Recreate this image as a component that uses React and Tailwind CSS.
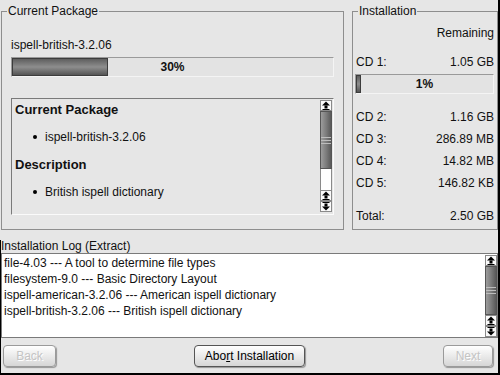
import React from "react";

function Arrow({ down = false }) {
  return (
    <svg width="8" height="9" viewBox="0 0 8 9" className={down ? "rotate-180" : ""}>
      <polygon points="4,0.5 8,4.5 0,4.5" fill="#000" />
      <rect x="2.5" y="4.5" width="3" height="3" fill="#000" />
      <rect x="0.5" y="8" width="7" height="1" fill="#000" />
    </svg>
  );
}

function SBtn({ down }) {
  return (
    <div className="h-[11px] shrink-0 w-full flex items-center justify-center bg-[#fafafa] border border-[#8a8a8a]">
      <Arrow down={down} />
    </div>
  );
}

function Thumb({ h, grow }) {
  return (
    <div
      className={
        "w-full border border-[#555] bg-gradient-to-r from-[#9c9c9c] via-[#7d7d7d] to-[#5a5a5a] flex flex-col items-center justify-center gap-[2px] " +
        (grow ? "flex-1 min-h-0" : h)
      }
    >
      <div className="w-full h-[1px] bg-[#bdbdbd]" />
      <div className="w-full h-[1px] bg-[#bdbdbd]" />
      <div className="w-full h-[1px] bg-[#bdbdbd]" />
    </div>
  );
}

function Bar({ label, fillW }) {
  return (
    <div className="relative h-[20px] w-full border border-[#9a9a9a] border-b-[#f4f4f4] border-r-[#f4f4f4] bg-[#e3e3e3] flex items-center">
      <div
        className="h-full border border-[#3c3c3c] bg-gradient-to-b from-[#5f5f5f] via-[#8e8e8e] to-[#555]"
        style={{ width: fillW }}
      />
      <span className="absolute inset-0 flex items-center justify-center font-bold text-[12px]">{label}</span>
    </div>
  );
}

function Btn({ children, w, disabled }) {
  return (
    <div
      className={
        "h-[22px] rounded-[4px] border flex items-center justify-center text-[12px] shadow-[1px_1px_1px_rgba(0,0,0,0.35)] bg-gradient-to-b from-[#ffffff] to-[#d6d6d6] " +
        w +
        (disabled
          ? " border-[#9a9a9a] text-[#c4c4c4] [text-shadow:1px_1px_0_#ffffff]"
          : " border-[#555] text-black")
      }
    >
      {children}
    </div>
  );
}

export default function App() {
  return (
    <div
      className="w-[500px] h-[375px] bg-[#e6e6e6] border-r-2 border-b-2 border-black flex flex-col text-[#111] text-[12px] overflow-hidden"
      style={{ fontFamily: '"Liberation Sans", Arial, sans-serif' }}
    >
      {/* top row */}
      <div className="flex pt-[4px] pl-[1px] gap-[8px] shrink-0">
        <fieldset className="w-[343px] h-[226px] border border-[#8e8e8e] p-0 m-0">
          <legend className="ml-[5px] px-[1px] leading-[14px]">Current Package</legend>
          <div className="px-[9px] flex flex-col">
            <div className="mt-[20px] leading-[14px]">ispell-british-3.2.06</div>
            <div className="mt-[5px]">
              <Bar label="30%" fillW="30%" />
            </div>
            <div className="mt-[21px] h-[117px] border border-[#7a7a7a] border-b-[#fafafa] border-r-[#fafafa] flex">
              <div className="flex-1 pl-[3px] pt-[3px] flex flex-col">
                <div className="font-bold text-[13px] leading-[16px]">Current Package</div>
                <div className="mt-[12px] leading-[14px] flex items-center ml-[18px]">
                  <span className="w-[4px] h-[4px] rounded-full bg-black mr-[8px]" />
                  ispell-british-3.2.06
                </div>
                <div className="mt-[13px] font-bold text-[13px] leading-[16px]">Description</div>
                <div className="mt-[12px] leading-[14px] flex items-center ml-[18px]">
                  <span className="w-[4px] h-[4px] rounded-full bg-black mr-[8px]" />
                  British ispell dictionary
                </div>
              </div>
              <div className="w-[12px] mr-[1px] flex flex-col pt-[1px] pb-[2px]">
                <SBtn />
                <Thumb h="h-[58px]" />
                <div className="flex-1 bg-white border-x border-[#8a8a8a]" />
                <SBtn />
                <SBtn down />
              </div>
            </div>
          </div>
        </fieldset>

        <fieldset className="w-[146px] h-[226px] border border-[#8e8e8e] p-0 m-0">
          <legend className="ml-[5px] px-[1px] leading-[14px]">Installation</legend>
          <div className="px-[3px] flex flex-col">
            <div className="mt-[8px] leading-[14px] text-right">Remaining</div>
            <div className="mt-[15px] leading-[14px] flex justify-between">
              <span>CD 1:</span>
              <span>1.05 GB</span>
            </div>
            <div className="mt-[5px] -ml-[1px]">
              <Bar label="1%" fillW="5px" />
            </div>
            <div className="mt-[12px] h-[22px] flex items-center justify-between">
              <span>CD 2:</span>
              <span>1.16 GB</span>
            </div>
            <div className="h-[22px] flex items-center justify-between">
              <span>CD 3:</span>
              <span>286.89 MB</span>
            </div>
            <div className="h-[22px] flex items-center justify-between">
              <span>CD 4:</span>
              <span>14.82 MB</span>
            </div>
            <div className="h-[22px] flex items-center justify-between">
              <span>CD 5:</span>
              <span>146.82 KB</span>
            </div>
            <div className="mt-[11px] h-[22px] flex items-center justify-between">
              <span>Total:</span>
              <span>2.50 GB</span>
            </div>
          </div>
        </fieldset>
      </div>

      {/* log */}
      <div className="flex-1 flex flex-col border-l border-black mt-[10px]">
        <div className="leading-[13px] h-[13px] shrink-0">Installation Log (Extract)</div>
        <div className="h-[85px] shrink-0 bg-white border border-[#7a7a7a] flex overflow-hidden">
          <div className="flex-1 pl-[2px] pt-[1px] flex flex-col leading-[16px]">
            <div>file-4.03 --- A tool to determine file types</div>
            <div>filesystem-9.0 --- Basic Directory Layout</div>
            <div>ispell-american-3.2.06 --- American ispell dictionary</div>
            <div>ispell-british-3.2.06 --- British ispell dictionary</div>
          </div>
          <div className="w-[12px] flex flex-col pt-[1px]">
            <SBtn />
            <Thumb grow />
            <SBtn />
            <SBtn down />
          </div>
        </div>
        <div className="mt-[7px] shrink-0 flex justify-between pl-[2px] pr-[5px]">
          <Btn w="w-[53px]" disabled>Back</Btn>
          <Btn w="w-[111px]">
            <span>
              Abo<span className="underline">r</span>t Installation
            </span>
          </Btn>
          <Btn w="w-[50px]" disabled>Next</Btn>
        </div>
      </div>
    </div>
  );
}
